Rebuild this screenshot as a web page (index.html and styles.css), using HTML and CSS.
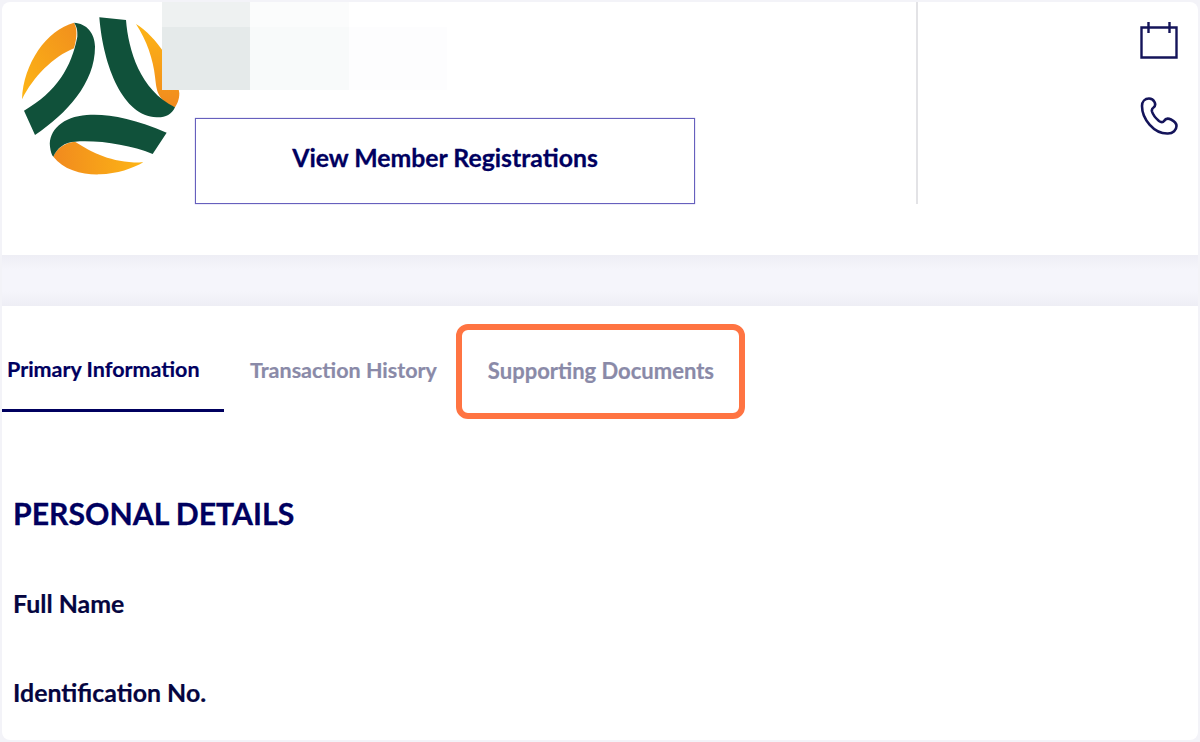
FILE: index.html
```html
<!DOCTYPE html>
<html>
<head lang="en">
    <meta charset="UTF-8">
    <title>Member Profile</title>
    <link rel="stylesheet" href="styles.css">
</head>
<body>
<div class="card">
    <div class="header">
        <svg class="logo" viewBox="60 45 486 492">
            <defs>
                <linearGradient id="orangeA" x1="0" y1="1" x2="1" y2="0">
                    <stop offset="0" stop-color="#fdb515"/>
                    <stop offset="1" stop-color="#f18f1d"/>
                </linearGradient>
                <linearGradient id="orangeB" x1="0" y1="0" x2="1" y2="0">
                    <stop offset="0" stop-color="#f18a1e"/>
                    <stop offset="1" stop-color="#fdb515"/>
                </linearGradient>
                <linearGradient id="orangeC" x1="0" y1="0" x2="0" y2="1">
                    <stop offset="0" stop-color="#fdb515"/>
                    <stop offset="1" stop-color="#f18a1e"/>
                </linearGradient>
            </defs>
            <path fill="url(#orangeA)" d="M222 68C140 90 70 190 66 298C100 230 160 170 222 145C232 110 232 85 222 68Z"/>
            <path fill="url(#orangeC)" d="M408 72C470 110 530 200 538 280C538 300 530 315 525 322C470 300 470 270 465 230C460 180 440 120 408 72Z"/>
            <path fill="url(#orangeB)" d="M160 470C190 510 250 525 300 523C350 522 400 505 430 487C340 490 280 460 225 425C195 428 170 445 160 470Z"/>
            <path fill="#10513a" d="M222 68C260 70 285 100 285 140C285 250 200 340 105 405L72 332C170 275 215 200 232 110C233 90 230 78 222 68Z"/>
            <path fill="#10513a" d="M298 52L378 60C385 150 420 270 525 322C515 345 495 353 470 352C370 350 310 200 298 52Z"/>
            <path fill="#10513a" d="M500 398C400 355 320 340 260 345C190 350 145 390 150 440C152 455 155 465 160 470C170 445 195 425 225 425C300 420 390 435 458 462Z"/>
        </svg>
        <a href="#" class="register-btn">View Member Registrations</a>
        <div class="divider"></div>
        <div class="header-icons">
            <svg class="icon" viewBox="0 0 38 38" fill="none" stroke="#14145a" stroke-width="2.4">
                <path d="M1.500 5.500H36.500V35.500H1.500Z"/>
                <path d="M8.500 0V11M29.500 0V11"/>
            </svg>
            <svg class="icon" viewBox="0 0 38 38" fill="none" stroke="#14145a" stroke-width="2.6" stroke-linejoin="round">
                <path d="M9 1.500C5 1.500 2 4.500 2 9C2 22 14 37 28 36.500C33 36.500 36.500 33 36.500 29C36.500 26 34 24 31 22.500C28 21 25.500 21.500 24 24C23 25.500 21 25.500 19 24C15.500 21 13 18 12 14.500C11.500 12.500 12 11.500 13.500 10.500C15.500 9 15.500 7 14.500 5C13.500 3 11.500 1.500 9 1.500Z"/>
            </svg>
        </div>
        <div class="redact">
            <span class="r1"></span><span class="r2"></span><span class="r3"></span>
            <span class="r4"></span><span class="r5"></span><span class="r6"></span>
        </div>
    </div>
    <div class="band"></div>
    <div class="tabs">
        <a href="#" class="tab on">Primary Information</a>
        <a href="#" class="tab">Transaction History</a>
        <a href="#" class="tab marked">Supporting Documents</a>
    </div>
    <div class="details">
        <h2>PERSONAL DETAILS</h2>
        <div class="field">Full Name</div>
        <div class="field">Identification No.</div>
    </div>
</div>
</body>
</html>
```
FILE: styles.css
```css
*
{
    margin: 0;
    padding: 0;
    box-sizing: border-box;
    text-decoration: none;
}
html, body
{
    height: 100%;
}
body
{
    background-color: #f3f3f8;
    font-family: Lato, "Liberation Sans", sans-serif;
    padding: 2px;
    overflow: hidden;
}
.card
{
    height: 738px;
    background-color: #fff;
    border-radius: 8px;
    overflow: hidden;
}
.header
{
    position: relative;
    display: flex;
    align-items: flex-start;
    height: 253px;
}
.logo
{
    width: 162px;
    height: 164px;
    margin: 13px 0 0 18px;
    flex-shrink: 0;
    filter: blur(.4px);
}
.register-btn
{
    display: flex;
    align-items: center;
    justify-content: center;
    width: 500px;
    height: 86px;
    margin: 116px 0 0 13px;
    padding-bottom: 8px;
    border: 1px solid #6660bd;
    box-shadow: 0 0 1px #8f8ad2;
    color: #00005f;
    font-size: 24.800px;
    font-weight: 700;
    -webkit-text-stroke: .3px #00005f;
}
.divider
{
    width: 2px;
    height: 202px;
    margin-left: 221px;
    background-color: #e3e3e6;
}
.header-icons
{
    display: flex;
    flex-direction: column;
    gap: 37px;
    margin: 20px 0 0 222px;
}
.icon
{
    display: block;
    width: 38px;
    height: 38px;
    filter: blur(.4px);
}
.redact
{
    position: absolute;
    left: 160px;
    top: 0;
    display: grid;
    grid-template-columns: 88px 99px 98px;
    grid-template-rows: 25px 63px;
}
.r1 { background-color: #eef1f1; }
.r2 { background-color: #fbfcfc; }
.r3 { background-color: #fff; }
.r4 { background-color: #e5eaea; }
.r5 { background-color: #f8fafa; }
.r6 { background-color: #fdfdfe; }
.band
{
    height: 51px;
    background: linear-gradient(#eeeef5, #f5f5fb 30%, #f5f5fb 70%, #eeeef5);
}
.tabs
{
    display: flex;
    height: 106px;
}
.tab
{
    position: relative;
    display: flex;
    align-items: center;
    height: 106px;
    padding: 22px 25px 0 26px;
    color: #8a8aa8;
    font-size: 21.500px;
    font-weight: 700;
    -webkit-text-stroke: .2px #8a8aa8;
}
.tab.on
{
    width: 222px;
    padding-left: 5px;
    padding-right: 0;
    color: #00005f;
    border-bottom: 3px solid #00005f;
    -webkit-text-stroke: .2px #00005f;
}
.tab.marked
{
    font-size: 22px;
}
.tab.marked::after
{
    content: "";
    box-sizing: border-box;
    position: absolute;
    left: -6px;
    top: 18px;
    width: 289px;
    height: 95px;
    border: 6px solid #ff7442;
    border-radius: 12px;
}
.details
{
    padding: 0 11px;
}
.details h2
{
    margin-top: 83px;
    color: #00005f;
    font-size: 30.200px;
    font-weight: 700;
    line-height: 36px;
    -webkit-text-stroke: .3px #00005f;
}
.field
{
    margin-top: 55px;
    color: #050540;
    font-size: 24.900px;
    font-weight: 700;
    line-height: 34px;
    -webkit-text-stroke: .2px #050540;
}
```
